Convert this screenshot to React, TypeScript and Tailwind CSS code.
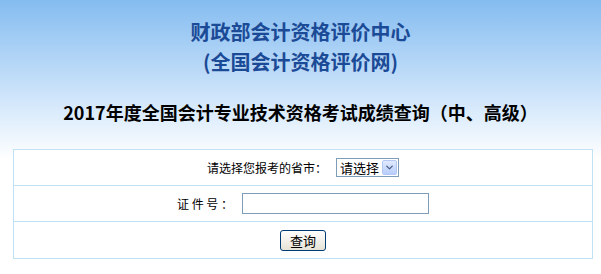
import { ChevronDown } from "lucide-react";

export default function App() {
  return (
    <div
      className="min-h-screen bg-white bg-no-repeat bg-[length:100%_160px] bg-gradient-to-b from-[#84bcf0] to-white pt-[17px] pb-4"
      style={{ fontFamily: '"Noto Sans CJK SC", "Liberation Sans", sans-serif' }}
    >
      <div className="text-center text-[20px] font-bold leading-[30px] text-[#1b4a96]">
        <div>财政部会计资格评价中心</div>
        <div>(全国会计资格评价网)</div>
      </div>

      <h1 className="mt-[23px] text-center text-[18px] font-bold leading-[24px] text-black">
        2017年度全国会计专业技术资格考试成绩查询（中、高级）
      </h1>

      <div className="mt-[25px] ml-[13px] w-[580px] border border-[#c1e2f5] bg-white text-[12px] text-black">
        <div className="h-[36px] border-b border-[#c1e2f5] flex items-center justify-center gap-[9px]">
          <span>请选择您报考的省市：</span>
          <div className="relative w-[63px] h-[19px] border border-[#7f9db9] bg-white flex items-center">
            <select className="appearance-none w-full h-full bg-transparent pl-[3px] text-[13px] leading-[17px] outline-none">
              <option>请选择</option>
            </select>
            <span className="absolute right-[1px] top-[1px] w-[15px] h-[15px] rounded-[2px] border border-[#b4c8f6] bg-gradient-to-b from-[#e1eafe] to-[#b7cdfb] flex items-center justify-center pointer-events-none">
              <ChevronDown size={11} strokeWidth={3} className="text-[#4d6185]" />
            </span>
          </div>
        </div>

        <div className="h-[36px] border-b border-[#c1e2f5] flex items-center justify-center gap-[9px]">
          <span>证 件 号 ：</span>
          <input
            type="text"
            className="w-[187px] h-[21px] border border-[#7f9db9] bg-white px-1 outline-none"
          />
        </div>

        <div className="h-[36px] flex items-center justify-center">
          <button className="w-[46px] h-[21px] border border-[#003c74] rounded-[3px] bg-gradient-to-b from-white to-[#e6e3d6] text-[13px] leading-[19px]">
            查询
          </button>
        </div>
      </div>
    </div>
  );
}
